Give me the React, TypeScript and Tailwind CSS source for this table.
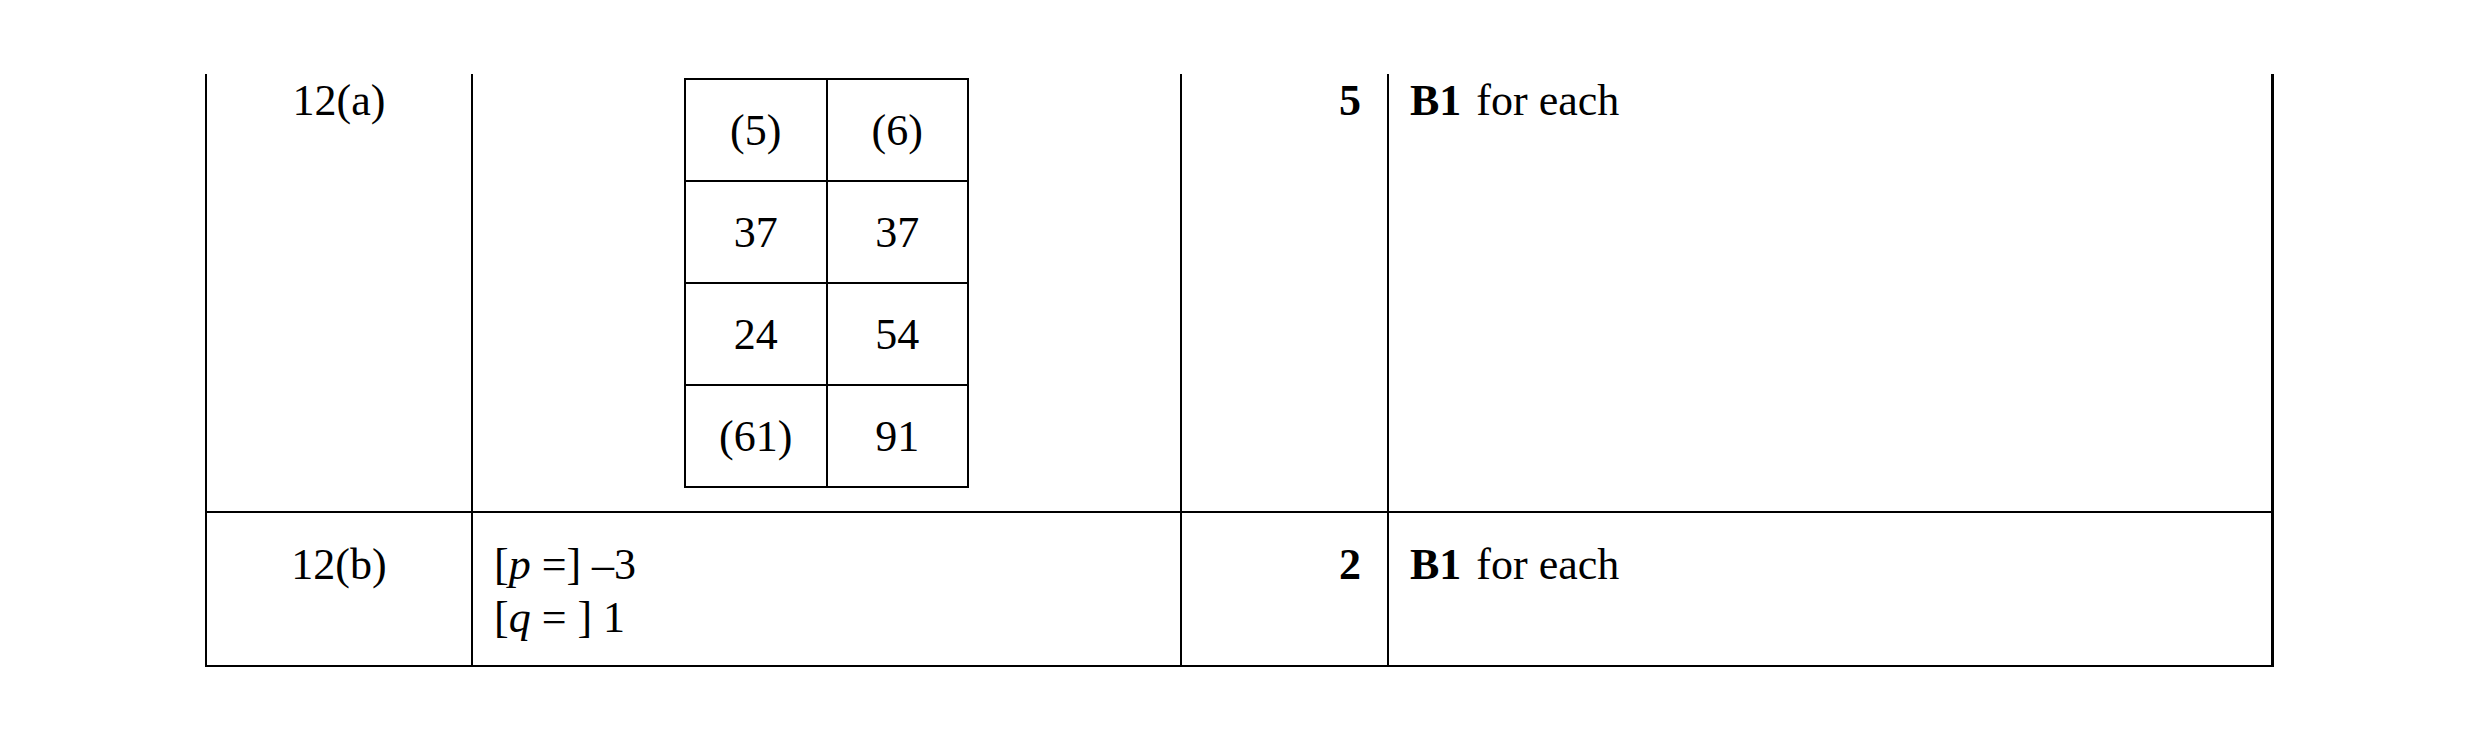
const cells = [
  ["(5)", "(6)"],
  ["37", "37"],
  ["24", "54"],
  ["(61)", "91"],
];

function AnswerGrid() {
  return (
    <div className="mx-auto mt-[4px] grid w-[285px] grid-cols-2 border-t-2 border-l-2 border-black">
      {cells.flat().map((v, i) => (
        <div
          key={i}
          className="flex h-[102px] items-center justify-center border-r-2 border-b-2 border-black"
        >
          {v}
        </div>
      ))}
    </div>
  );
}

function Guidance() {
  return (
    <>
      <b>B1</b>
      <span className="ml-[4px]"> for each</span>
    </>
  );
}

export default function App() {
  return (
    <div className="h-[744px] w-[2480px] bg-white pt-[74px] pl-[205px] font-['Liberation_Serif','Times_New_Roman',serif] text-[44px] leading-[53px] text-black">
      <div className="w-[2069px]">
        {/* 12(a) */}
        <div className="grid h-[437px] grid-cols-[266px_709px_207px_887px]">
          <div className="border-l-2 border-black text-center">12(a)</div>
          <div className="border-l-2 border-black">
            <AnswerGrid />
          </div>
          <div className="border-l-2 border-black pr-[26px] text-right font-bold">5</div>
          <div className="border-l-2 border-r-[3px] border-black pl-[21px]">
            <Guidance />
          </div>
        </div>

        {/* 12(b) */}
        <div className="grid h-[156px] grid-cols-[266px_709px_207px_887px] border-y-2 border-black">
          <div className="border-l-2 border-black pt-[25px] text-center">12(b)</div>
          <div className="border-l-2 border-black pt-[25px] pl-[21px]">
            <div>
              [<i>p</i> =] –3
            </div>
            <div>
              [<i>q</i> = ] 1
            </div>
          </div>
          <div className="border-l-2 border-black pt-[25px] pr-[26px] text-right font-bold">2</div>
          <div className="border-l-2 border-r-[3px] border-black pt-[25px] pl-[21px]">
            <Guidance />
          </div>
        </div>
      </div>
    </div>
  );
}
